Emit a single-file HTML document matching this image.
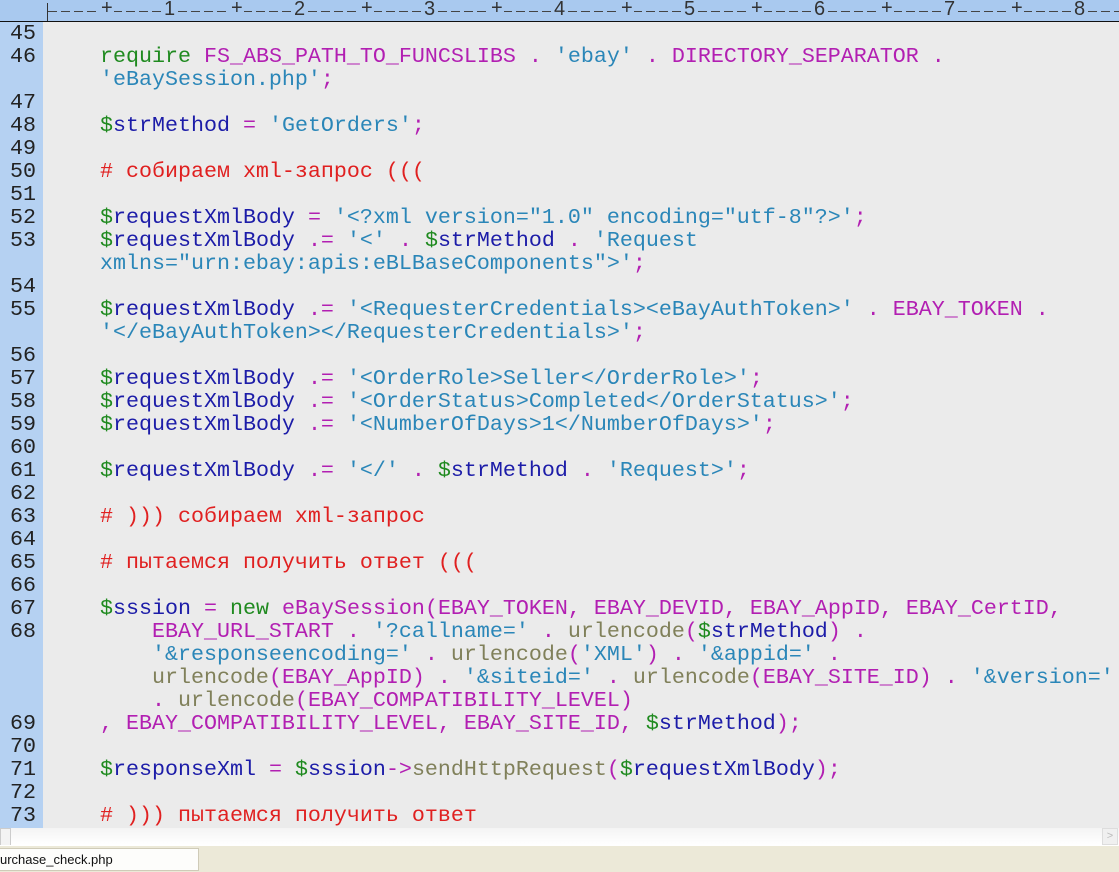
<!DOCTYPE html>
<html><head><meta charset="utf-8"><style>
body{margin:0;width:1119px;height:871px;overflow:hidden;background:#ebebeb;position:relative;font-family:"Liberation Mono",monospace}
#ruler{position:absolute;left:0;top:0;width:1119px;height:21px;background:#a9c9ef;border-bottom:1px solid #111}
#ruler .d{position:absolute;top:11px;height:1px;left:48px;width:1071px;background:repeating-linear-gradient(90deg,#444 0 9px,transparent 9px 13px)}
#ruler span{position:absolute;top:-2px;font:20px "Liberation Sans",sans-serif;color:#333;background:#a9c9ef;padding:0 1px}
#ruler .bar{position:absolute;left:47px;top:3px;width:1px;height:18px;background:#333}
#gut{position:absolute;left:0;top:22px;width:43px;height:806px;background:#b5d1f2}
.r{position:absolute;left:0;height:23px;line-height:23px;font-size:21.67px;white-space:pre;color:#222}
.n{position:absolute;left:10px;width:40px;color:#222}
.t{position:absolute;left:48px}
.k{color:#1f8a1f}.d{color:#1f8a1f}.v{color:#1c1ca8}.s{color:#2a86b8}.c{color:#e02020}.o{color:#b21fb2}.C{color:#b21fb2}.f{color:#80805a}
#sb{position:absolute;left:0;top:828px;width:1119px;height:17px;background:linear-gradient(#f4f4f4,#fff)}
#tabs{position:absolute;left:0;top:845px;width:1119px;height:26px;background:#ece9d8;border-top:1px solid #fff}
#tab{position:absolute;left:0;top:2px;width:198px;height:21px;background:#fdfdfb;border:1px solid #cfcbb8;border-left:0;font:13px "Liberation Sans",sans-serif;line-height:21px;color:#111;overflow:hidden;white-space:nowrap}
</style></head><body>
<div id="ruler"><div class="d"></div><div class="bar"></div>
<span style="left:100px;top:-3px">+</span><span style="left:163px">1</span>
<span style="left:230px;top:-3px">+</span><span style="left:293px">2</span>
<span style="left:360px;top:-3px">+</span><span style="left:423px">3</span>
<span style="left:490px;top:-3px">+</span><span style="left:553px">4</span>
<span style="left:620px;top:-3px">+</span><span style="left:683px">5</span>
<span style="left:750px;top:-3px">+</span><span style="left:813px">6</span>
<span style="left:880px;top:-3px">+</span><span style="left:943px">7</span>
<span style="left:1010px;top:-3px">+</span><span style="left:1073px">8</span>
</div>
<div id="gut"></div>

<div class="r" style="top:22px"><span class="n">45</span></div>
<div class="r" style="top:45px"><span class="n">46</span><span class="t">    <span class="k">require</span> <span class="C">FS_ABS_PATH_TO_FUNCSLIBS</span> <span class="o">.</span> <span class="s">'ebay'</span> <span class="o">.</span> <span class="C">DIRECTORY_SEPARATOR</span> <span class="o">.</span></span></div>
<div class="r" style="top:68px"><span class="t">    <span class="s">'eBaySession.php'</span><span class="o">;</span></span></div>
<div class="r" style="top:91px"><span class="n">47</span></div>
<div class="r" style="top:114px"><span class="n">48</span><span class="t">    <span class="d">$</span><span class="v">strMethod</span> <span class="o">=</span> <span class="s">'GetOrders'</span><span class="o">;</span></span></div>
<div class="r" style="top:137px"><span class="n">49</span></div>
<div class="r" style="top:160px"><span class="n">50</span><span class="t">    <span class="c"># собираем xml-запрос (((</span></span></div>
<div class="r" style="top:183px"><span class="n">51</span></div>
<div class="r" style="top:206px"><span class="n">52</span><span class="t">    <span class="d">$</span><span class="v">requestXmlBody</span> <span class="o">=</span> <span class="s">'&lt;?xml version="1.0" encoding="utf-8"?&gt;'</span><span class="o">;</span></span></div>
<div class="r" style="top:229px"><span class="n">53</span><span class="t">    <span class="d">$</span><span class="v">requestXmlBody</span> <span class="o">.=</span> <span class="s">'&lt;'</span> <span class="o">.</span> <span class="d">$</span><span class="v">strMethod</span> <span class="o">.</span> <span class="s">'Request</span></span></div>
<div class="r" style="top:252px"><span class="t">    <span class="s">xmlns="urn:ebay:apis:eBLBaseComponents"&gt;'</span><span class="o">;</span></span></div>
<div class="r" style="top:275px"><span class="n">54</span></div>
<div class="r" style="top:298px"><span class="n">55</span><span class="t">    <span class="d">$</span><span class="v">requestXmlBody</span> <span class="o">.=</span> <span class="s">'&lt;RequesterCredentials&gt;&lt;eBayAuthToken&gt;'</span> <span class="o">.</span> <span class="C">EBAY_TOKEN</span> <span class="o">.</span></span></div>
<div class="r" style="top:321px"><span class="t">    <span class="s">'&lt;/eBayAuthToken&gt;&lt;/RequesterCredentials&gt;'</span><span class="o">;</span></span></div>
<div class="r" style="top:344px"><span class="n">56</span></div>
<div class="r" style="top:367px"><span class="n">57</span><span class="t">    <span class="d">$</span><span class="v">requestXmlBody</span> <span class="o">.=</span> <span class="s">'&lt;OrderRole&gt;Seller&lt;/OrderRole&gt;'</span><span class="o">;</span></span></div>
<div class="r" style="top:390px"><span class="n">58</span><span class="t">    <span class="d">$</span><span class="v">requestXmlBody</span> <span class="o">.=</span> <span class="s">'&lt;OrderStatus&gt;Completed&lt;/OrderStatus&gt;'</span><span class="o">;</span></span></div>
<div class="r" style="top:413px"><span class="n">59</span><span class="t">    <span class="d">$</span><span class="v">requestXmlBody</span> <span class="o">.=</span> <span class="s">'&lt;NumberOfDays&gt;1&lt;/NumberOfDays&gt;'</span><span class="o">;</span></span></div>
<div class="r" style="top:436px"><span class="n">60</span></div>
<div class="r" style="top:459px"><span class="n">61</span><span class="t">    <span class="d">$</span><span class="v">requestXmlBody</span> <span class="o">.=</span> <span class="s">'&lt;/'</span> <span class="o">.</span> <span class="d">$</span><span class="v">strMethod</span> <span class="o">.</span> <span class="s">'Request&gt;'</span><span class="o">;</span></span></div>
<div class="r" style="top:482px"><span class="n">62</span></div>
<div class="r" style="top:505px"><span class="n">63</span><span class="t">    <span class="c"># ))) собираем xml-запрос</span></span></div>
<div class="r" style="top:528px"><span class="n">64</span></div>
<div class="r" style="top:551px"><span class="n">65</span><span class="t">    <span class="c"># пытаемся получить ответ (((</span></span></div>
<div class="r" style="top:574px"><span class="n">66</span></div>
<div class="r" style="top:597px"><span class="n">67</span><span class="t">    <span class="d">$</span><span class="v">sssion</span> <span class="o">=</span> <span class="k">new</span> <span class="C">eBaySession</span><span class="o">(</span><span class="C">EBAY_TOKEN</span><span class="o">,</span> <span class="C">EBAY_DEVID</span><span class="o">,</span> <span class="C">EBAY_AppID</span><span class="o">,</span> <span class="C">EBAY_CertID</span><span class="o">,</span></span></div>
<div class="r" style="top:620px"><span class="n">68</span><span class="t">        <span class="C">EBAY_URL_START</span> <span class="o">.</span> <span class="s">'?callname='</span> <span class="o">.</span> <span class="f">urlencode</span><span class="o">(</span><span class="d">$</span><span class="v">strMethod</span><span class="o">)</span> <span class="o">.</span></span></div>
<div class="r" style="top:643px"><span class="t">        <span class="s">'&amp;responseencoding='</span> <span class="o">.</span> <span class="f">urlencode</span><span class="o">(</span><span class="s">'XML'</span><span class="o">)</span> <span class="o">.</span> <span class="s">'&amp;appid='</span> <span class="o">.</span></span></div>
<div class="r" style="top:666px"><span class="t">        <span class="f">urlencode</span><span class="o">(</span><span class="C">EBAY_AppID</span><span class="o">)</span> <span class="o">.</span> <span class="s">'&amp;siteid='</span> <span class="o">.</span> <span class="f">urlencode</span><span class="o">(</span><span class="C">EBAY_SITE_ID</span><span class="o">)</span> <span class="o">.</span> <span class="s">'&amp;version='</span></span></div>
<div class="r" style="top:689px"><span class="t">        <span class="o">.</span> <span class="f">urlencode</span><span class="o">(</span><span class="C">EBAY_COMPATIBILITY_LEVEL</span><span class="o">)</span></span></div>
<div class="r" style="top:712px"><span class="n">69</span><span class="t">    <span class="o">,</span> <span class="C">EBAY_COMPATIBILITY_LEVEL</span><span class="o">,</span> <span class="C">EBAY_SITE_ID</span><span class="o">,</span> <span class="d">$</span><span class="v">strMethod</span><span class="o">);</span></span></div>
<div class="r" style="top:735px"><span class="n">70</span></div>
<div class="r" style="top:758px"><span class="n">71</span><span class="t">    <span class="d">$</span><span class="v">responseXml</span> <span class="o">=</span> <span class="d">$</span><span class="v">sssion</span><span class="o">-&gt;</span><span class="f">sendHttpRequest</span><span class="o">(</span><span class="d">$</span><span class="v">requestXmlBody</span><span class="o">);</span></span></div>
<div class="r" style="top:781px"><span class="n">72</span></div>
<div class="r" style="top:804px"><span class="n">73</span><span class="t">    <span class="c"># ))) пытаемся получить ответ</span></span></div>

<div id="sb"><div style="position:absolute;left:0;top:0;width:9px;height:16px;border:1px solid #ccc;background:#f3f3f3"></div><div style="position:absolute;right:1px;top:0;width:14px;height:15px;border:1px solid #ddd;background:#f0f0f0;color:#bbb;font:11px sans-serif;text-align:center;line-height:15px">&gt;</div></div>
<div id="tabs"><div id="tab">urchase_check.php</div></div>
</body></html>
